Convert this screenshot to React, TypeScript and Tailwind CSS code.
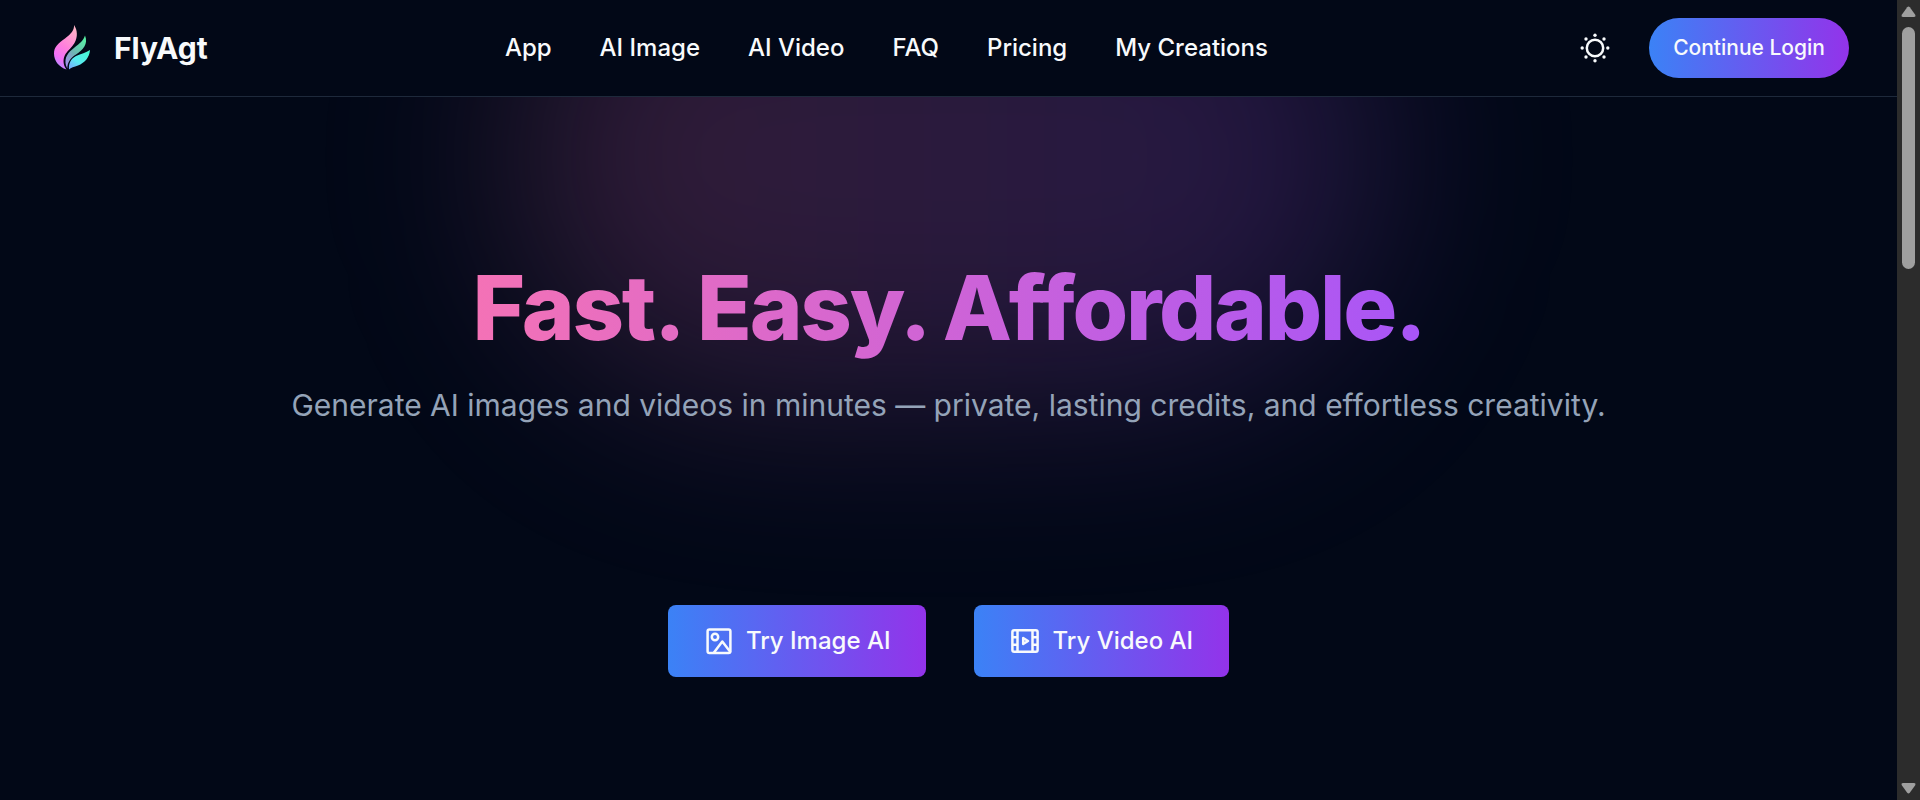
import React from "react";

const navItems = ["App", "AI Image", "AI Video", "FAQ", "Pricing", "My Creations"];

function FlameLogo() {
  return (
    <svg viewBox="0 0 36 46" className="h-[46px] w-9" aria-hidden="true">
      <defs>
        <linearGradient id="flameLeft" x1="0.7" y1="0" x2="0.3" y2="1">
          <stop offset="0" stopColor="#ffb3c7" />
          <stop offset="0.5" stopColor="#ff7fdc" />
          <stop offset="0.8" stopColor="#f070f8" />
          <stop offset="1" stopColor="#b08cff" />
        </linearGradient>
        <linearGradient id="flameMid" x1="0.8" y1="0" x2="0.1" y2="1">
          <stop offset="0" stopColor="#58f0a4" />
          <stop offset="0.55" stopColor="#6fb3b4" />
          <stop offset="1" stopColor="#a88cf5" />
        </linearGradient>
        <linearGradient id="flameRight" x1="0.9" y1="0" x2="0.1" y2="1">
          <stop offset="0" stopColor="#45f7cf" />
          <stop offset="0.6" stopColor="#58eaf0" />
          <stop offset="1" stopColor="#7aa8ff" />
        </linearGradient>
      </defs>
      <path fill="url(#flameLeft)" d="M20 0C20.500 5 17 9 11 13.500C4 18.500 0 22 0 28.500C0 36 5 42 12.500 44.500C9 40 8.500 34 11.500 29C14 25 18 22.500 20.500 18C24 12 23.500 5 20 0Z" />
      <path fill="url(#flameMid)" d="M31 10.500C29.500 15.500 25.500 18.500 20.500 22.500C14 27.500 10 32.500 12 40.500L13.300 43.500C13.500 37 16.500 33 22 29.500C29 25 34.500 19 31 10.500Z" />
      <path fill="url(#flameRight)" d="M36 25C32 28 27 28.500 22 31C16.500 34 14.500 38.500 15 44.500C17 42.500 20 42 24 40.500C30.500 38 35.500 32.500 36 25Z" />
    </svg>
  );
}

function SunIcon() {
  return (
    <svg viewBox="0 0 30 30" className="size-[30px]" fill="none" aria-hidden="true">
      <circle cx="15" cy="15" r="8.200" stroke="currentColor" strokeWidth="2.500" />
      <g fill="currentColor">
        <circle cx="15" cy="2.200" r="1.700" />
        <circle cx="15" cy="27.800" r="1.700" />
        <circle cx="2.200" cy="15" r="1.700" />
        <circle cx="27.800" cy="15" r="1.700" />
        <circle cx="6" cy="6" r="1.700" />
        <circle cx="24" cy="6" r="1.700" />
        <circle cx="6" cy="24" r="1.700" />
        <circle cx="24" cy="24" r="1.700" />
      </g>
    </svg>
  );
}

function ImageIcon() {
  return (
    <svg viewBox="0 0 30 30" className="size-[30px]" fill="none" stroke="currentColor" strokeWidth="2.500" strokeLinejoin="round" strokeLinecap="round" aria-hidden="true">
      <rect x="3.600" y="3.400" width="22.800" height="23.600" rx="1.800" />
      <circle cx="11" cy="11" r="3.200" />
      <path d="M10 26.500L18.300 15.500L26 25.500" />
    </svg>
  );
}

function VideoIcon() {
  return (
    <svg viewBox="0 0 30 30" className="size-[30px]" fill="none" stroke="currentColor" strokeWidth="2.500" strokeLinejoin="round" aria-hidden="true">
      <rect x="2.400" y="4.200" width="25.200" height="21.600" rx="1.800" />
      <path d="M7.500 4.200V25.800M22.500 4.200V25.800M2.400 11.300H7.500M2.400 18.700H7.500M22.500 11.300H27.600M22.500 18.700H27.600" />
      <path d="M13.200 12V18L18 15Z" />
    </svg>
  );
}

function Scrollbar() {
  return (
    <div className="flex w-[23px] shrink-0 flex-col items-center justify-between bg-[#2c2c2c] py-[6px]" aria-hidden="true">
      <div className="flex flex-col items-center gap-[10px]">
        <svg viewBox="0 0 15 11" className="h-[11px] w-[15px]">
          <path fill="#9f9f9f" d="M6.200 1.200Q7.500 0 8.800 1.200L14.400 9Q15 11 13 11H2Q0 11 .6 9Z" />
        </svg>
        <div className="h-[242px] w-[13px] rounded-full bg-[#9f9f9f]" />
      </div>
      <svg viewBox="0 0 15 11" className="h-[11px] w-[15px]">
        <path fill="#9f9f9f" d="M6.200 9.800Q7.500 11 8.800 9.800L14.400 2Q15 0 13 0H2Q0 0 .6 2Z" />
      </svg>
    </div>
  );
}

export default function App() {
  return (
    <div className="flex min-h-screen bg-[#020817] font-['Inter',sans-serif] text-slate-50">
      <div className="flex min-w-0 flex-1 flex-col">
        <header className="relative z-10 flex items-center justify-between border-b border-[#1e293b] bg-[#020817] py-[18px] pr-12 pl-[54px]">
          <a href="#" className="flex items-center gap-6">
            <FlameLogo />
            <span className="text-[30px] leading-10 font-bold">FlyAgt</span>
          </a>
          <nav className="flex items-center gap-12">
            {navItems.map((item) => (
              <a key={item} href="#" className="text-2xl leading-8 font-medium">
                {item}
              </a>
            ))}
          </nav>
          <div className="flex items-center gap-6">
            <button type="button" aria-label="Toggle theme" className="flex size-[60px] items-center justify-center">
              <SunIcon />
            </button>
            <button type="button" className="h-[60px] rounded-full bg-linear-to-r/srgb from-[#3b82f6] to-[#9333ea] px-6 text-[21px] font-medium">
              Continue Login
            </button>
          </div>
        </header>
        <main className="relative flex flex-1 flex-col items-center overflow-hidden pt-[155px]">
          <div
            aria-hidden="true"
            className="absolute -top-[180px] left-1/2 h-[480px] w-[864px] -translate-x-1/2 rounded-full bg-linear-to-r/srgb from-[#f472b6]/20 to-[#a855f7]/20 blur-[96px]"
          />
          <h1 className="relative bg-linear-to-r/srgb from-[#f472b6] to-[#a855f7] bg-clip-text text-[90px] leading-[112px] font-extrabold tracking-tight text-transparent">
            Fast. Easy. Affordable.
          </h1>
          <p className="relative mt-[21px] text-[30px] leading-10 text-[#94a3b8]">
            Generate AI images and videos in minutes — private, lasting credits, and effortless creativity.
          </p>
          <div className="relative mt-[180px] flex gap-12">
            <button type="button" className="flex h-[72px] items-center gap-3 rounded-lg bg-linear-to-r/srgb from-[#3b82f6] to-[#9333ea] px-9 text-2xl font-medium">
              <ImageIcon />
              Try Image AI
            </button>
            <button type="button" className="flex h-[72px] items-center gap-3 rounded-lg bg-linear-to-r/srgb from-[#3b82f6] to-[#9333ea] px-9 text-2xl font-medium">
              <VideoIcon />
              Try Video AI
            </button>
          </div>
        </main>
      </div>
      <Scrollbar />
    </div>
  );
}
